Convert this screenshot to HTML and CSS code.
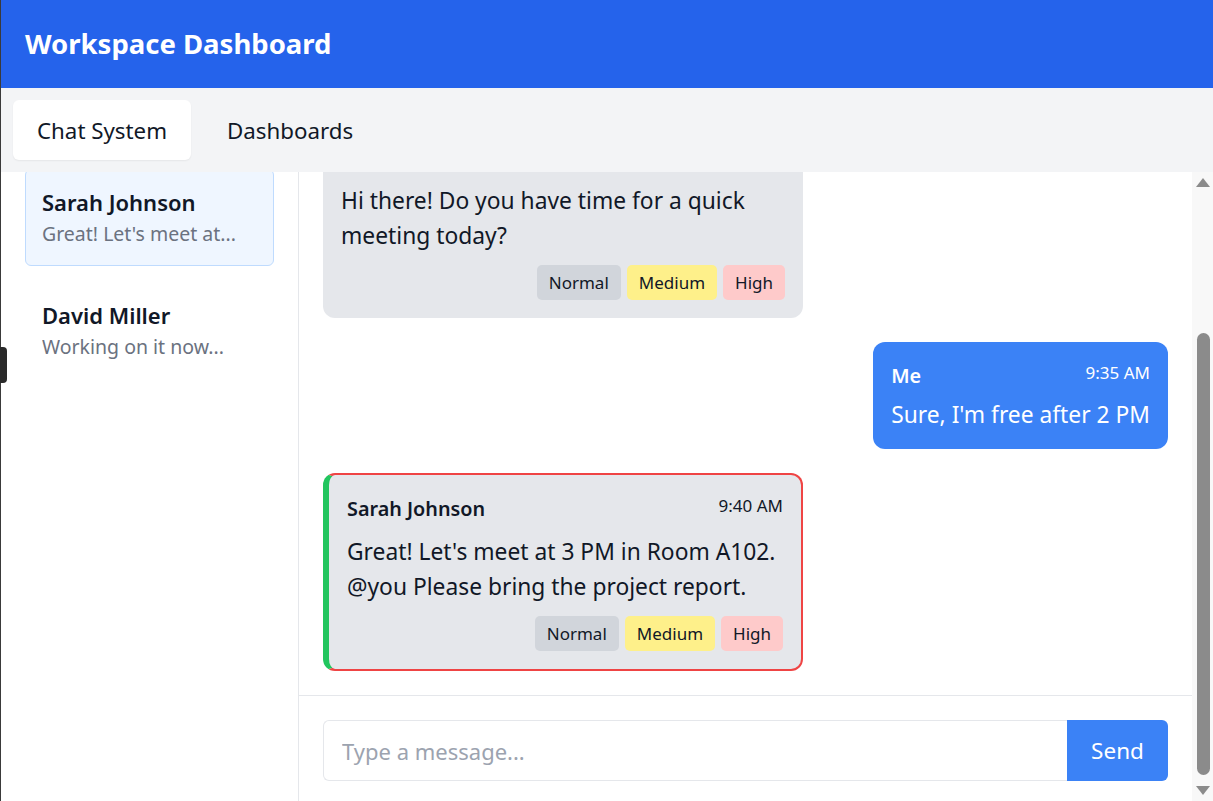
FILE: index.html
```html
<!DOCTYPE html>
<html lang="en">
<head>
<meta charset="utf-8">
<title>Workspace Dashboard</title>
<link rel="stylesheet" href="styles.css">
</head>
<body>
<div class="app">
  <header class="topbar">
    <h1 class="title">Workspace Dashboard</h1>
  </header>
  <nav class="tabs">
    <button class="tab tab-active">Chat System</button>
    <button class="tab">Dashboards</button>
  </nav>
  <main class="main">
    <div class="viewport" id="viewport">
      <div class="layout">
        <aside class="sidebar">
          <div class="search">Search conversations...</div>
          <ul class="convos">
            <li class="convo">
              <div class="convo-name">Team Standup</div>
              <div class="convo-preview">Meeting moved to 10 AM</div>
            </li>
            <li class="convo convo-active">
              <div class="convo-name">Sarah Johnson</div>
              <div class="convo-preview">Great! Let's meet at...</div>
            </li>
            <li class="convo">
              <div class="convo-name">David Miller</div>
              <div class="convo-preview">Working on it now...</div>
            </li>
          </ul>
        </aside>
        <section class="chat">
          <div class="messages">
            <div class="msg msg-other">
              <div class="msg-head"><span class="msg-name">Sarah Johnson</span><span class="msg-time">9:28 AM</span></div>
              <div class="msg-text">Good morning!</div>
            </div>
            <div class="msg msg-other">
              <div class="msg-head"><span class="msg-name">Sarah Johnson</span><span class="msg-time">9:30 AM</span></div>
              <div class="msg-text">Hi there! Do you have time for a quick meeting today?</div>
              <div class="tags"><span class="tag tag-normal">Normal</span><span class="tag tag-medium">Medium</span><span class="tag tag-high">High</span></div>
            </div>
            <div class="msg msg-me">
              <div class="msg-head"><span class="msg-name">Me</span><span class="msg-time">9:35 AM</span></div>
              <div class="msg-text">Sure, I'm free after 2 PM</div>
            </div>
            <div class="msg msg-other msg-mention">
              <div class="msg-head"><span class="msg-name">Sarah Johnson</span><span class="msg-time">9:40 AM</span></div>
              <div class="msg-text">Great! Let's meet at 3 PM in Room A102. @you Please bring the project report.</div>
              <div class="tags"><span class="tag tag-normal">Normal</span><span class="tag tag-medium">Medium</span><span class="tag tag-high">High</span></div>
            </div>
          </div>
          <form class="composer">
            <input class="composer-input" type="text" placeholder="Type a message...">
            <button class="composer-send" type="button">Send</button>
          </form>
        </section>
      </div>
    </div>
    <div class="rail" aria-hidden="true">
      <div class="rail-btn"><span class="arrow-up"></span></div>
      <div class="rail-track"><div class="rail-thumb"></div></div>
      <div class="rail-btn"><span class="arrow-down"></span></div>
    </div>
  </main>
  <div class="edge-tab"></div>
</div>
<script src="script.js"></script>
</body>
</html>
```

FILE: styles.css
```css
* { box-sizing: border-box; }
html, body { margin: 0; padding: 0; height: 100%; }
body {
  font-family: "Noto Sans", "Open Sans", sans-serif;
  color: #111827;
  background: #fff;
}
.app {
  height: 100vh;
  display: flex;
  flex-direction: column;
  border-left: 1px solid #3a3a3a;
}
.topbar {
  background: #2563eb;
  height: 88px;
  flex: none;
  display: flex;
  align-items: center;
  padding: 0 24px;
}
.title {
  margin: 0;
  color: #fff;
  font-size: 27.5px;
  font-weight: 700;
  line-height: 40px;
}
.tabs {
  flex: none;
  background: #f3f4f6;
  height: 84px;
  padding: 12px;
  display: flex;
  gap: 12px;
}
.tab {
  font-family: inherit;
  font-size: 22.3px;
  color: #111827;
  background: transparent;
  border: 0;
  border-radius: 6px;
  padding: 0 24px;
  height: 60px;
}
.tab-active {
  background: #fff;
  box-shadow: 0 1px 2px rgba(0,0,0,0.06);
}
.main {
  flex: 1;
  min-height: 0;
  display: flex;
}
.viewport {
  flex: 1;
  min-width: 0;
  overflow: hidden;
}
.rail {
  flex: none;
  width: 21px;
  background: #f8f8f8;
  display: flex;
  flex-direction: column;
}
.rail-btn {
  flex: none;
  height: 21px;
  display: flex;
  align-items: center;
  justify-content: center;
}
.arrow-up {
  width: 0;
  height: 0;
  border-left: 7px solid transparent;
  border-right: 7px solid transparent;
  border-bottom: 9px solid #8b8b8b;
}
.arrow-down {
  width: 0;
  height: 0;
  border-left: 7px solid transparent;
  border-right: 7px solid transparent;
  border-top: 9px solid #8b8b8b;
}
.rail-track {
  flex: 1;
  padding-top: 140px;
}
.rail-thumb {
  height: 442px;
  margin: 0 3px 0 5px;
  background: #8b8b8b;
  border-radius: 7px;
}
.layout {
  display: flex;
  align-items: stretch;
  min-height: 100%;
}
.sidebar {
  flex: none;
  width: 298px;
  border-right: 1px solid #e5e7eb;
  padding: 24px;
}
.search {
  height: 44px;
  margin-bottom: 24px;
  border: 1px solid #e5e7eb;
  border-radius: 6px;
  padding: 0 14px;
  line-height: 42px;
  font-size: 17px;
  color: #9ca3af;
}
.convos {
  list-style: none;
  margin: 0;
  padding: 0;
  display: flex;
  flex-direction: column;
  gap: 16px;
}
.convo {
  border: 1px solid transparent;
  border-radius: 6px;
  padding: 16px;
}
.convo-active {
  background: #eff6ff;
  border-color: #bfdbfe;
}
.convo-name {
  font-size: 22px;
  font-weight: 600;
  line-height: 33px;
  color: #111827;
  white-space: nowrap;
}
.convo-preview {
  font-size: 19.5px;
  line-height: 30px;
  color: #6b7280;
  white-space: nowrap;
  overflow: hidden;
  text-overflow: ellipsis;
}
.chat {
  flex: 1;
  min-width: 0;
  display: flex;
  flex-direction: column;
}
.messages {
  padding: 24px;
  display: flex;
  flex-direction: column;
  gap: 24px;
  border-bottom: 1px solid #e5e7eb;
}
.msg {
  max-width: 480px;
  border-radius: 12px;
  padding: 18px;
}
.msg-other {
  align-self: flex-start;
  width: 480px;
  background: #e5e7eb;
  color: #111827;
}
.msg-me {
  align-self: flex-end;
  background: #3b82f6;
  color: #fff;
  padding-bottom: 17px;
}
.msg-mention {
  border: 2px solid #ef4444;
  border-left: 6px solid #22c55e;
}
.msg-head {
  display: flex;
  justify-content: space-between;
  align-items: flex-start;
  gap: 16px;
  margin-bottom: 10px;
}
.msg-me .msg-head { margin-bottom: 6px; }
.msg-name {
  font-size: 19.8px;
  font-weight: 600;
  line-height: 31px;
}
.msg-time {
  font-size: 17px;
  line-height: 26px;
}
.msg-text {
  font-size: 22.8px;
  line-height: 35px;
}
.tags {
  margin-top: 12px;
  display: flex;
  justify-content: flex-end;
  gap: 6px;
}
.tag {
  font-size: 17px;
  line-height: 29px;
  padding: 3px 12px;
  border-radius: 5px;
  color: #111827;
}
.tag-normal { background: #d1d5db; }
.tag-medium { background: #fef08a; }
.tag-high { background: #fecaca; }
.composer {
  margin: 0;
  padding: 24px;
  display: flex;
}
.composer-input {
  flex: 1;
  min-width: 0;
  height: 61px;
  font-family: inherit;
  font-size: 22px;
  padding: 0 18px;
  border: 1px solid #e5e7eb;
  border-right: 0;
  border-radius: 6px 0 0 6px;
  outline: none;
  color: #111827;
}
.composer-input::placeholder { color: #9ca3af; }
.composer-send {
  flex: none;
  height: 61px;
  width: 101px;
  font-family: inherit;
  font-size: 22.5px;
  color: #fff;
  background: #3b82f6;
  border: 0;
  border-radius: 0 6px 6px 0;
}
.edge-tab {
  position: fixed;
  left: 0;
  top: 347px;
  width: 7px;
  height: 36px;
  background: #2a2a2a;
  border-radius: 0 4px 4px 0;
}
```

FILE: script.js
```js
var vp = document.getElementById('viewport');
vp.scrollTop = vp.scrollHeight - vp.clientHeight - 4;
```
